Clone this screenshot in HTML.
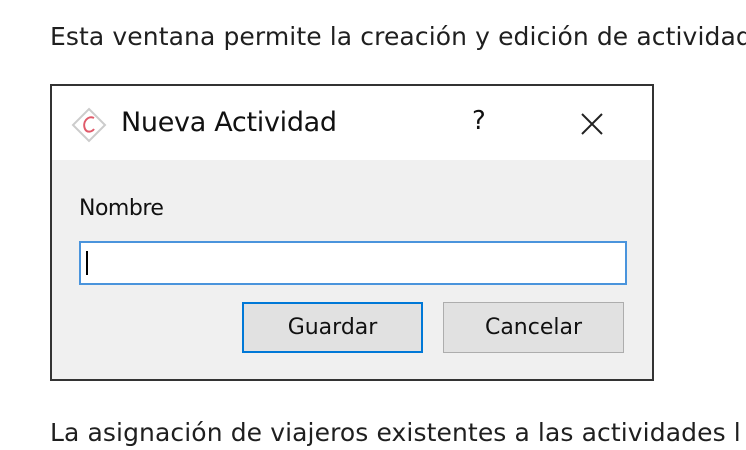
<!DOCTYPE html>
<html><head><style>
body{margin:0;width:746px;height:450px;background:#fff;position:relative;overflow:hidden;font-family:"DejaVu Sans","Liberation Sans",sans-serif;color:#222}
.t{position:absolute;left:50px;font-size:25px;white-space:nowrap;color:#1f1f1f;letter-spacing:0.1px}
.dlg{position:absolute;left:50px;top:84px;width:600px;height:293px;border:2px solid #333;background:#f0f0f0}
.title{position:absolute;left:0;top:0;width:600px;height:74px;background:#fff}
.ttl{position:absolute;left:69px;top:21px;font-size:27px;color:#111;letter-spacing:-0.3px}
.q{position:absolute;left:420px;top:20px;font-size:26px;color:#111}
.lbl{position:absolute;left:27px;top:110px;font-size:22px;color:#111;letter-spacing:-0.5px}
.inp{position:absolute;left:27px;top:155px;width:544px;height:40px;border:2px solid #4a94dc;background:#fff}
.cur{position:absolute;left:5px;top:8px;width:2px;height:24px;background:#000}
.btn{position:absolute;top:216px;width:177px;height:47px;background:#e1e1e1;font-size:22px;text-align:center;line-height:47px;color:#111}
</style></head><body>
<div class="t" style="top:22px">Esta ventana permite la creación y edición de actividades</div>
<div class="dlg">
 <div class="title">
  <svg style="position:absolute;left:18px;top:20px" width="38" height="38" viewBox="0 0 38 38">
   <path d="M19 3 L35 19 L19 35 L3 19 Z" fill="#fff" stroke="#ccc" stroke-width="2"/>
   <path d="M24 12 C18 9 12 16 15 23 C17 27 22 26 24 23" fill="none" stroke="#e05a6a" stroke-width="2"/>
  </svg>
  <div class="ttl">Nueva Actividad</div>
  <div class="q">?</div>
  <svg style="position:absolute;left:528px;top:26px" width="24" height="24" viewBox="0 0 24 24"><path d="M2 2L22 22M22 2L2 22" stroke="#222" stroke-width="2"/></svg>
 </div>
 <div class="lbl">Nombre</div>
 <div class="inp"><div class="cur"></div></div>
 <div class="btn" style="left:190px;border:2px solid #0078d7">Guardar</div>
 <div class="btn" style="left:391px;border:1px solid #adadad;width:179px;height:49px;line-height:49px">Cancelar</div>
</div>
<div class="t" style="top:418px">La asignación de viajeros existentes a las actividades l</div>
</body></html>
